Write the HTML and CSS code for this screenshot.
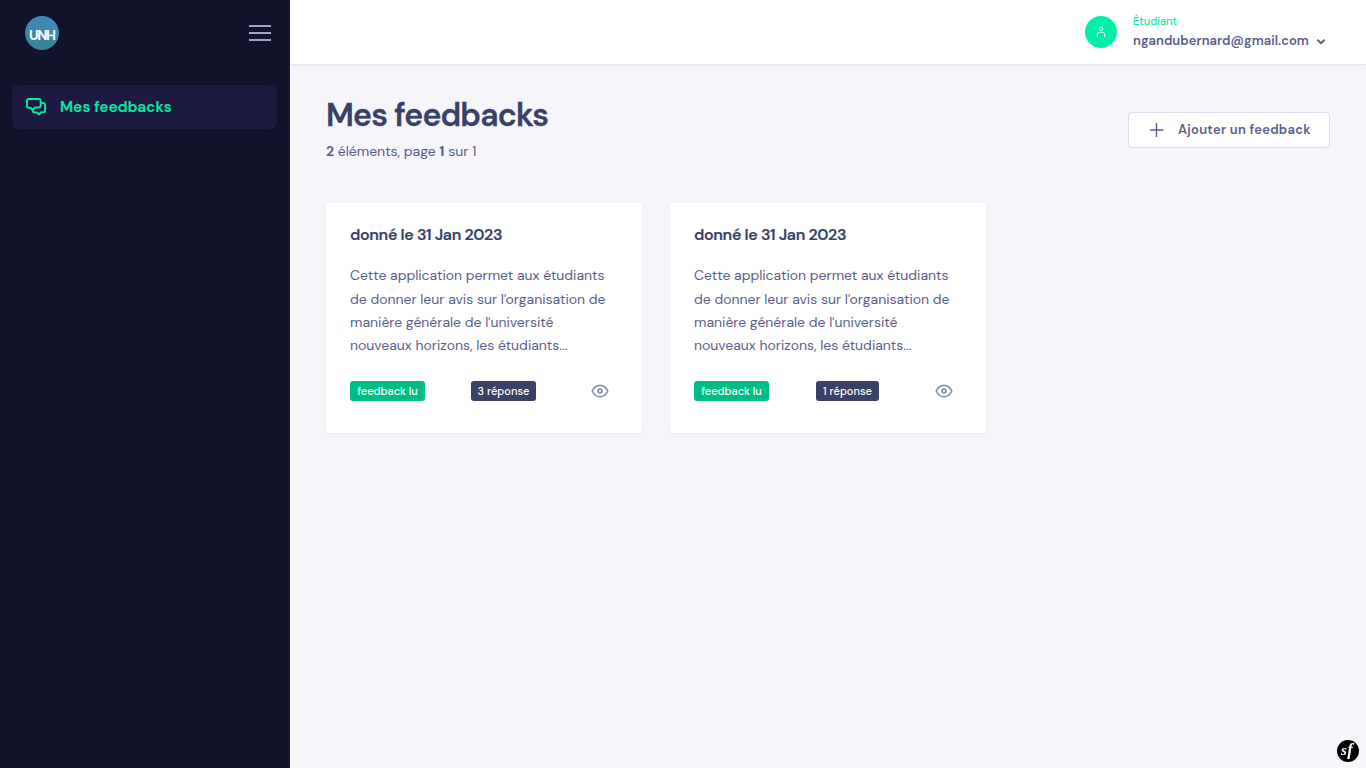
FILE: index.html
```html
<!DOCTYPE html>
<html lang="fr">
<head>
<meta charset="utf-8">
<title>Mes feedbacks</title>
<link rel="stylesheet" href="styles.css">
</head>
<body>
<svg class="defs" aria-hidden="true">
  <symbol id="eye" viewBox="0 0 18 14"><path d="M1.200 7C3 3.200 5.800 1.300 9 1.300S15 3.200 16.800 7c-1.800 3.800-4.600 5.700-7.800 5.700S3 10.800 1.200 7z"/><circle cx="9" cy="7" r="1.900"/></symbol>
</svg>
<div class="app">
  <aside class="sidebar">
    <div class="brand-row">
      <svg class="logo" viewBox="0 0 34 34"><defs><linearGradient id="lg" x1="0" y1="0" x2="0" y2="1"><stop offset="0.4" stop-color="#3b89b4"/><stop offset="0.8" stop-color="#39849b"/></linearGradient></defs><circle cx="17" cy="17" r="17" fill="url(#lg)"/><text x="4" y="23.500">UNH</text></svg>
      <button class="burger" aria-label="Menu"><i></i><i></i><i></i></button>
    </div>
    <a class="nav-item">
      <svg class="nav-icon" viewBox="0 0 22 20"><path d="M3.900 1.900h9.900a1.900 1.900 0 0 1 1.900 1.900v4.800a1.900 1.900 0 0 1-1.900 1.900H10.200L7.500 12.800 5.500 10.700H3.900A1.900 1.900 0 0 1 2 8.800V3.800a1.900 1.900 0 0 1 1.900-1.900z"/><path d="M16 5.900h2.200a1.900 1.900 0 0 1 1.900 1.900v5.500a1.900 1.900 0 0 1-1.900 1.900h-2L14 17.500l-2.200-1.900h-2a2 2 0 0 1-2-2v-.8"/></svg>
      <span>Mes feedbacks</span>
    </a>
  </aside>
  <div class="main">
    <header class="topbar">
      <div class="user">
        <div class="avatar"><svg viewBox="0 0 10 12"><circle cx="5" cy="2.700" r="1.700"/><path d="M1.300 10.800V8.600a2.300 2.300 0 0 1 2.300-2.300h2.800a2.300 2.300 0 0 1 2.300 2.300v2.200"/></svg></div>
        <div class="user-info">
          <div class="role">Étudiant</div>
          <div class="email"><span>ngandubernard@gmail.com</span><svg viewBox="0 0 10 8"><path d="M1.900 2.300 5 5.200l3.100-2.900"/></svg></div>
        </div>
      </div>
    </header>
    <main class="content">
      <div class="head">
        <div class="titles">
          <h1>Mes feedbacks</h1>
          <p class="sub"><b>2</b> éléments, page <b>1</b> sur 1</p>
        </div>
        <a class="btn"><svg viewBox="0 0 14 14"><path d="M6.500 .5v13M0 7h13"/></svg><span>Ajouter un feedback</span></a>
      </div>
      <div class="cards">
        <article class="card">
          <h2>donné le 31 Jan 2023</h2>
          <p class="text">Cette application permet aux étudiants<br>de donner leur avis sur l'organisation de<br>manière générale de l'université<br>nouveaux horizons, les étudiants...</p>
          <div class="foot"><span class="badge green">feedback lu</span><span class="badge navy three">3 réponse</span><svg class="eye"><use href="#eye"/></svg></div>
        </article>
        <article class="card">
          <h2>donné le 31 Jan 2023</h2>
          <p class="text">Cette application permet aux étudiants<br>de donner leur avis sur l'organisation de<br>manière générale de l'université<br>nouveaux horizons, les étudiants...</p>
          <div class="foot"><span class="badge green">feedback lu</span><span class="badge navy one">1 réponse</span><svg class="eye"><use href="#eye"/></svg></div>
        </article>
      </div>
    </main>
  </div>
</div>
<div class="sf"><svg viewBox="0 0 22 22"><circle cx="11" cy="11" r="11"/><text x="4" y="15.300">s</text><text class="f" x="10.200" y="14.600">f</text></svg></div>
</body>
</html>
```
FILE: styles.css
```css
* { box-sizing: border-box; }
body { margin: 0; background: #f5f5fa; color: #5b5e8b; font-family: "DM Sans", Inter, sans-serif; font-size: 13px; }
svg { display: block; flex: none; fill: none; stroke: currentColor; stroke-linecap: round; stroke-linejoin: round; }
.defs { display: none; }
h1, h2, p { margin: 0; }
.app { display: flex; height: 768px; }
.sidebar { flex: none; width: 290px; background: #11122b; border-right: 1px solid #1c1b43; }
.brand-row { height: 65px; display: flex; align-items: center; justify-content: space-between; padding: 1px 18px 0 25px; }
.logo { width: 34px; height: 34px; stroke: none; overflow: visible; }
.logo text { fill: #fff; font: 700 14px "DM Sans", sans-serif; letter-spacing: -1.400px; }
.burger { border: 0; background: none; padding: 0; width: 22px; display: flex; flex-direction: column; gap: 5px; }
.burger i { height: 2px; background: #9da5c5; }
.nav-item { display: flex; align-items: center; gap: 12px; margin: 20px 12px 0; padding-left: 13px; height: 44px; width: 265px; border-radius: 6px; background: #1b1a40; color: #09e7a2; font-size: 15px; font-weight: 600; }
.nav-icon { width: 22px; height: 20px; stroke-width: 2; }
.nav-item span { margin-left: 1px; letter-spacing: .2px; -webkit-text-stroke: .15px; }
.main { flex: 1; }
.topbar { height: 65px; background: #fff; border-bottom: 1px solid #e5e3f1; box-shadow: 0 1px 3px rgba(80, 80, 150, .06); display: flex; justify-content: flex-end; padding-right: 40px; }
.user { display: flex; align-items: center; gap: 16px; }
.avatar { width: 32px; height: 32px; border-radius: 50%; background: #00f0a9; color: #fff; display: grid; place-items: center; }
.avatar svg { width: 10px; height: 12px; }
.user-info { width: 193px; }
.role { color: #00efa8; font-size: 11px; font-weight: 500; line-height: 14px; margin-bottom: 4px; }
.email { display: flex; align-items: center; justify-content: space-between; font-weight: 600; line-height: 18px; letter-spacing: .04px; white-space: nowrap; }
.email svg { width: 10px; height: 8px; stroke-width: 1.900; margin-top: 2px; }
.content { padding: 29px 36px 0; }
.head { display: flex; justify-content: space-between; align-items: center; height: 72px; }
.titles { margin-top: -4px; }
h1 { color: #394166; font-size: 32px; line-height: 40px; font-weight: 600; letter-spacing: -.82px; -webkit-text-stroke: .3px; }
.sub { font-size: 14px; line-height: 22px; margin-top: 5px; letter-spacing: -.02px; }
.sub b { font-weight: 700; }
.btn { width: 202px; height: 36px; border: 1px solid #dddbed; border-radius: 4px; background: #fff; display: flex; align-items: center; padding-left: 21px; gap: 14px; font-weight: 600; letter-spacing: .28px; white-space: nowrap; }
.btn span { margin-top: -2px; }
.btn svg { width: 14px; height: 14px; stroke-width: 1.400; }
.cards { display: flex; gap: 28px; margin-top: 37px; }
.card { width: 316px; height: 230px; border-radius: 4px; background: #fff; box-shadow: 0 1px 3px rgba(70, 75, 130, .07); padding: 22px 24px; }
h2 { color: #394166; font-size: 16px; line-height: 20px; font-weight: 600; letter-spacing: -.360px; -webkit-text-stroke: .15px; }
.text { margin-top: 19.200px; font-size: 14px; line-height: 23.330px; letter-spacing: -.02px; white-space: nowrap; }
.foot { display: flex; align-items: center; justify-content: space-between; width: 259px; margin-top: 23.500px; }
.badge { height: 20px; line-height: 20px; border-radius: 3px; color: #fff; font-size: 11px; font-weight: 500; text-align: center; white-space: nowrap; }
.green { width: 75px; background: #00bd86; }
.navy { background: #394166; margin-right: 9px; }
.three { width: 65px; }
.one { width: 63px; }
.eye { width: 18px; height: 14px; color: #8491b8; stroke-width: 1.700; }
.sf { position: fixed; right: 7px; bottom: 6px; width: 22px; height: 22px; }
.sf svg { width: 22px; height: 22px; stroke: none; }
.sf circle { fill: #000; }
.sf text { fill: #fff; font: italic 700 15px "Liberation Serif", serif; }
.sf .f { font-size: 17px; }
```
